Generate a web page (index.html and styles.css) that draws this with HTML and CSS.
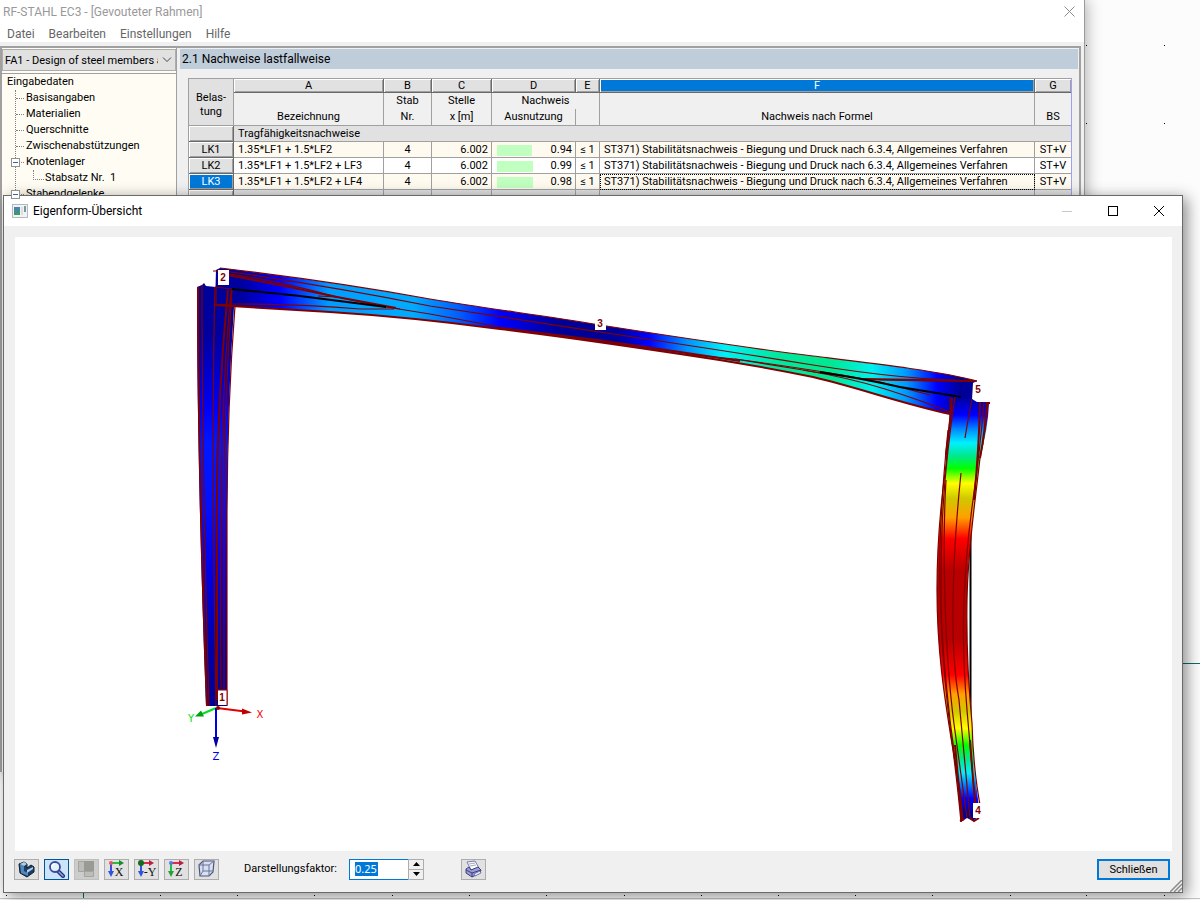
FILE: index.html
```html
<!DOCTYPE html>
<html lang="de">
<head>
<meta charset="utf-8">
<title>RF-STAHL EC3 - [Gevouteter Rahmen]</title>
<link rel="stylesheet" href="styles.css">
</head>
<body>
<main class="desktop">
  <svg class="grid" aria-hidden="true">
    <g class="grid-dots">
      <path d="M1086 45.5h1M1164 45.5h1M1086 123.500h1M1164 123.500h1"/>
      <path d="M6 895.5h1M160 895.5h1M237 895.5h1M314 895.5h1M392 895.5h1M469 895.5h1M546 895.5h1M624 895.5h1M701 895.5h1M778 895.5h1M855 895.5h1M932 895.5h1M1010 895.5h1M1086 895.5h1M1164 895.5h1"/>
    </g>
    <path d="M1180 663.5H1200M83.5 890V898" stroke="#0b6b6b"/>
    <path d="M0 898.5H1200" stroke="#c4c4c4"/>
  </svg>

  <section class="app" aria-label="RF-STAHL EC3">
    <header class="app-title">
      <span>RF-STAHL EC3 - [Gevouteter Rahmen]</span>
      <button class="app-close" aria-label="Fenster schließen"><svg width="11" height="11" viewBox="0 0 11 11"><path d="M.5.5l10 10M10.5.5l-10 10" stroke="#8c8c8c" fill="none"/></svg></button>
    </header>
    <nav class="menu">
      <button>Datei</button><button>Bearbeiten</button><button>Einstellungen</button><button>Hilfe</button>
    </nav>
    <div class="app-body">
      <aside class="side">
        <div class="case">
          <select aria-label="Bemessungsfall"><option>FA1 - Design of steel members according to Eurocode 3</option></select>
          <svg class="chevron" width="10" height="6" viewBox="0 0 10 6"><path d="M1 .5l4 4 4-4" fill="none" stroke="#444"/></svg>
        </div>
        <div class="tree">
          <div class="root">Eingabedaten</div>
          <ul>
            <li>Basisangaben</li>
            <li>Materialien</li>
            <li>Querschnitte</li>
            <li>Zwischenabstützungen</li>
            <li class="open"><button class="toggle" aria-label="Knotenlager zuklappen"></button>Knotenlager
              <ul class="sub"><li>Stabsatz Nr.&nbsp; 1</li></ul>
            </li>
            <li class="open"><button class="toggle" aria-label="Stabendgelenke zuklappen"></button>Stabendgelenke</li>
          </ul>
        </div>
      </aside>
      <section class="content">
        <h1>2.1 Nachweise lastfallweise</h1>
        <div class="sheet">
          <table>
            <colgroup><col class="c-head"><col class="c-a"><col class="c-b"><col class="c-c"><col class="c-d"><col class="c-e"><col><col class="c-g"></colgroup>
            <thead>
              <tr class="letters"><th rowspan="3" class="corner">Belas-<br>tung</th><th>A</th><th>B</th><th>C</th><th>D</th><th>E</th><th class="active">F</th><th class="last">G</th></tr>
              <tr class="names"><th rowspan="2">Bezeichnung</th><th rowspan="2">Stab<br>Nr.</th><th rowspan="2">Stelle<br>x [m]</th><th colspan="2" class="group">Nachweis</th><th rowspan="2">Nachweis nach Formel</th><th rowspan="2" class="last">BS</th></tr>
              <tr class="names"><th>Ausnutzung</th><th></th></tr>
            </thead>
            <tbody>
              <tr class="section"><th></th><td colspan="7" class="last">Tragfähigkeitsnachweise</td></tr>
              <tr class="odd"><th>LK1</th><td>1.35*LF1 + 1.5*LF2</td><td class="mid">4</td><td class="num">6.002</td><td class="num"><span class="bar" style="width:35px"></span>0.94</td><td class="mid">≤ 1</td><td>ST371) Stabilitätsnachweis - Biegung und Druck nach 6.3.4, Allgemeines Verfahren</td><td class="mid last">ST+V</td></tr>
              <tr><th>LK2</th><td>1.35*LF1 + 1.5*LF2 + LF3</td><td class="mid">4</td><td class="num">6.002</td><td class="num"><span class="bar" style="width:36px"></span>0.99</td><td class="mid">≤ 1</td><td>ST371) Stabilitätsnachweis - Biegung und Druck nach 6.3.4, Allgemeines Verfahren</td><td class="mid last">ST+V</td></tr>
              <tr class="odd"><th class="active">LK3</th><td>1.35*LF1 + 1.5*LF2 + LF4</td><td class="mid">4</td><td class="num">6.002</td><td class="num"><span class="bar" style="width:36px"></span>0.98</td><td class="mid">≤ 1</td><td class="focus">ST371) Stabilitätsnachweis - Biegung und Druck nach 6.3.4, Allgemeines Verfahren</td><td class="mid last">ST+V</td></tr>
              <tr class="blank"><th></th><td></td><td></td><td></td><td></td><td></td><td></td><td class="last"></td></tr>
            </tbody>
          </table>
        </div>
      </section>
    </div>
  </section>

  <section class="dialog" role="dialog" aria-labelledby="dlg-title">
    <header class="dlg-bar">
      <svg width="16" height="14" viewBox="0 0 16 14"><defs><linearGradient id="ico" x1="0" y1="0" x2="0" y2="1"><stop offset="0" stop-color="#4b7fc0"/><stop offset="1" stop-color="#3f9a62"/></linearGradient></defs><rect x=".5" y=".5" width="15" height="13" fill="#f2f2f2" stroke="#b5b9bd"/><rect x="2" y="3" width="6" height="8" fill="url(#ico)"/><rect x="9" y="3" width="2" height="8" fill="#dcdfe2"/><rect x="12" y="2" width="2" height="6" fill="#6f9aa0"/></svg>
      <h2 id="dlg-title">Eigenform-Übersicht</h2>
      <div class="win-buttons">
        <button disabled aria-label="Minimieren"><svg width="12" height="12" viewBox="0 0 12 12"><path d="M1 6.500h10" stroke="#c8c8c8"/></svg></button>
        <button aria-label="Maximieren"><svg width="12" height="12" viewBox="0 0 12 12"><rect x="1.500" y="1.500" width="9" height="9" fill="none" stroke="#000"/></svg></button>
        <button aria-label="Schließen"><svg width="12" height="12" viewBox="0 0 12 12"><path d="M1 1l10 10M11 1L1 11" stroke="#000" fill="none"/></svg></button>
      </div>
    </header>

    <div class="view">
      <svg viewBox="15 237 1157 614" preserveAspectRatio="xMidYMid meet" role="img" aria-label="Eigenform des Rahmens">
        <defs>
          <linearGradient id="g-left" gradientUnits="userSpaceOnUse" x1="0" y1="285" x2="0" y2="706">
            <stop offset="0" stop-color="#009"/><stop offset=".12" stop-color="#0000a0"/><stop offset=".29" stop-color="#0000f4"/><stop offset=".38" stop-color="#0018ff"/><stop offset=".52" stop-color="#0010ff"/><stop offset=".68" stop-color="#0000e8"/><stop offset=".86" stop-color="#0000a8"/><stop offset="1" stop-color="#009"/>
          </linearGradient>
          <linearGradient id="g-beam" gradientUnits="userSpaceOnUse" x1="215" y1="300" x2="975" y2="300">
            <stop offset="0" stop-color="#009"/><stop offset=".035" stop-color="#0000a0"/><stop offset=".085" stop-color="#00f"/><stop offset=".15" stop-color="#009cff"/><stop offset=".26" stop-color="#00acff"/><stop offset=".32" stop-color="#0060ff"/><stop offset=".375" stop-color="#00f"/><stop offset=".45" stop-color="#009"/><stop offset=".53" stop-color="#009"/><stop offset=".57" stop-color="#00f"/><stop offset=".62" stop-color="#0090ff"/><stop offset=".67" stop-color="#00f0f8"/><stop offset=".74" stop-color="#00e8a0"/><stop offset=".81" stop-color="#00e890"/><stop offset=".865" stop-color="#00f0f0"/><stop offset=".91" stop-color="#0098ff"/><stop offset=".95" stop-color="#00f"/><stop offset=".98" stop-color="#009"/><stop offset="1" stop-color="#009"/>
          </linearGradient>
          <linearGradient id="g-right" gradientUnits="userSpaceOnUse" x1="0" y1="396" x2="0" y2="822">
            <stop offset="0" stop-color="#009"/><stop offset=".045" stop-color="#00f"/><stop offset=".08" stop-color="#0090ff"/><stop offset=".11" stop-color="#00f0ff"/><stop offset=".14" stop-color="#00e890"/><stop offset=".17" stop-color="#0f0"/><stop offset=".205" stop-color="#ff0"/><stop offset=".24" stop-color="#d0c800"/><stop offset=".285" stop-color="#ffa000"/><stop offset=".335" stop-color="#f00"/><stop offset=".41" stop-color="#b80000"/><stop offset=".57" stop-color="#b80000"/><stop offset=".655" stop-color="#f00"/><stop offset=".7" stop-color="#ffa000"/><stop offset=".74" stop-color="#d0c800"/><stop offset=".78" stop-color="#ff0"/><stop offset=".82" stop-color="#0f0"/><stop offset=".85" stop-color="#00e880"/><stop offset=".885" stop-color="#00f0ff"/><stop offset=".92" stop-color="#0060ff"/><stop offset=".945" stop-color="#00f"/><stop offset=".98" stop-color="#009"/><stop offset="1" stop-color="#009"/>
          </linearGradient>
        </defs>

        <!-- left column -->
        <path fill="url(#g-left)" d="M197 287L202 285 204 283 206 286 216 287 236 289 234 307Q227 410 227 520V706L206 706Q197 470 197 287Z"/>
        <!-- beam -->
        <path fill="url(#g-beam)" d="M216 270L220 268Q330 281 430 299C490 309 540 315 600 325Q740 347 813 356C870 363 940 371 977 381L973 383 972 400 950 414C900 403 860 388 813 377Q750 364 680 354C620 345 560 336 500 329Q410 317 330 312L215 305Z"/>
        <g class="edge">
          <path d="M220 268Q330 281 430 299C490 309 540 315 600 325Q740 347 813 356C870 363 940 371 977 381"/>
          <path d="M217 270Q330 286 430 306C500 317 550 324 600 332Q720 350 813 365T977 381"/>
          <path d="M222 273Q270 279 337 297L380 306 430 314 500 327"/>
          <path d="M318 296L337 297 400 309" />
          <path d="M232 304Q300 304 360 309L394 309"/>
          <path d="M215 287L232 289M215 305L232 304M213 271h6"/>
          <path d="M680 354L735 359 803 370Q845 377 867 379T973 381"/>
          <path d="M735 359Q830 372 880 382L930 395"/>
          <path d="M803 370Q850 378 885 389T950 412"/>
        </g>
        <g class="edge thick">
          <path d="M214 305L330 312Q410 317 500 329C560 336 620 345 680 354Q750 364 813 377C860 388 900 403 950 414L961 416"/>
          <path d="M228 275Q280 285 337 297L396 308"/>
          <path d="M500 328Q590 338 680 352L740 361"/>
          <path d="M865 379L974 381"/>
        </g>
        <path class="axis" d="M232 289L300 296 386 307M820 372Q865 379 900 387L961 397"/>
        <g class="edge">
          <path d="M202 285Q202 470 209 706M215 287Q211 430 216 706M231 290C220 410 220 520 221 690M232 290Q223 430 224 520V704"/>
          <path d="M216 287V304M235 306Q227 410 227 520V706"/>
        </g>
        <g class="edge thick">
          <path d="M198 287Q198 470 207 706"/>
          <path d="M228 290Q215 420 217 560V700"/>
        </g>

        <!-- right column -->
        <path class="axis" d="M970.500 530V730"/>
        <path fill="url(#g-right)" d="M950 397L972 399 977 402 989 402Q988 430 980 458C975 505 968 545 967 600Q966 660 972 723C973 760 976 785 980 815L973 821 967 818 961 822Q958 790 953 750C944 695 937 650 937 590Q937 530 946 465L950 417Z"/>
        <g class="edge">
          <path d="M950 397V417L946 465Q937 530 937 590C937 650 944 695 953 750Q958 790 961 822"/>
          <path d="M955 397Q944 470 942 530T942 640Q948 730 960 790L963 820"/>
          <path d="M948 430Q938 530 940 590T950 720L961 805"/>
          <path d="M946 480Q943 530 945 600T954 724L967 818"/>
          <path d="M972 399L968 420 965 438M961 473Q954 540 953 600T959 700L970 818"/>
          <path d="M988 402Q986 430 980 458C975 505 968 545 967 600Q966 660 972 723C973 760 976 785 981 810"/>
          <path d="M984 402Q980 450 973 500T964 600 967 710L976 814"/>
        </g>
        <g class="edge thick">
          <path d="M952 398Q950 425 946 455"/>
          <path d="M980 402Q979 450 974 500M987 403Q985 432 980 458"/>
          <path d="M955 745L962 821M970 740Q973 780 976 812M986 403h4M960 821l4-2M970 818l4 3 5-3"/>
        </g>

        <!-- coordinate cross -->
        <g fill="none" stroke-width="2">
          <path d="M217 708L245 711.500" stroke="#e00000"/><path d="M216 708L202 714" stroke="#00e020"/><path d="M216 708V739" stroke="#0000e8"/>
        </g>
        <path d="M252 712.500l-10 2-0-6z" fill="#c00000"/>
        <path d="M195 716.500l6-6 3 6z" fill="#00a010"/>
        <path d="M216 748l-3-11h6z" fill="#0000a0"/>
        <circle cx="218" cy="708" r="2" fill="#900000"/>
        <g class="axis-label">
          <text x="260" y="718" fill="#f00000">X</text><text x="191" y="722" fill="#00e000">Y</text><text x="216" y="760" fill="#0000e0">Z</text>
        </g>

        <!-- node numbers -->
        <g fill="#fff"><rect x="218" y="270" width="11" height="15"/><rect x="595" y="317" width="11" height="13"/><rect x="973" y="383" width="12" height="16"/><rect x="973" y="803" width="9" height="15"/><rect x="218" y="690" width="9" height="15"/></g>
        <path d="M218 690H227V705" fill="none" stroke="#a00000"/>
        <g class="node-label">
          <text x="223" y="281">2</text><text x="600" y="327">3</text><text x="978" y="393">5</text><text x="978" y="814">4</text><text x="222" y="701">1</text>
        </g>
      </svg>
    </div>

    <footer class="tools">
      <div class="tool-row">
        <button class="tool" aria-label="Rendering"><svg viewBox="0 0 20 18"><path d="M2 4l5-2 3 2v4l4-3 3 2v5l-7 5-7-4z" fill="#1f3d63" stroke="#101c2c"/><path d="M3 4l4 2v5l4 2v3l-7-3z" fill="#4f86bd"/><path d="M3 4l4-2 3 2-3 2zM10 10l6-3v2l-6 4z" fill="#a8d0f0"/></svg></button>
        <button class="tool on" aria-label="Zoom" aria-pressed="true"><svg viewBox="0 0 20 18"><path d="M11 11l5 5" stroke="#26347e" stroke-width="4" stroke-linecap="round"/><path d="M12 12l4 4" stroke="#8fa2dc" stroke-width="1.500" stroke-linecap="round"/><circle cx="8" cy="7" r="5" fill="#e4f1fc" stroke="#3a4a9c" stroke-width="1.800"/><path d="M5 7q0-3 3-3" fill="none" stroke="#fff" stroke-width="1.500"/></svg></button>
        <button class="tool off" disabled aria-label="Ansichten"><svg viewBox="0 0 20 18"><path d="M1.500 1.500h7v10h-7zM7.500 11.500h9v5h-9z" fill="#bcbcb8" stroke="#a4a4a0"/><path d="M7 1h10v10H7z" fill="#9a9a94"/></svg></button>
        <button class="tool" aria-label="Ansicht in X"><svg viewBox="0 0 20 18"><path d="M4 3h9" stroke="#25bd3c" stroke-width="2"/><path d="M12 0l5 3-5 3z" fill="#128f2c"/><path d="M4 3v9" stroke="#3052df" stroke-width="2"/><path d="M1 11h6l-3 6z" fill="#3052df"/><circle cx="4" cy="3" r="2" fill="#f05060"/><text x="12" y="16">X</text></svg></button>
        <button class="tool" aria-label="Ansicht in -Y"><svg viewBox="0 0 20 18"><path d="M4 3h9" stroke="#dc2946" stroke-width="2"/><path d="M12 0l5 3-5 3z" fill="#b8203c"/><path d="M4 3v9" stroke="#3052df" stroke-width="2"/><path d="M1 11h6l-3 6z" fill="#3052df"/><circle cx="4" cy="3" r="3" fill="#116b20"/><text x="13" y="16">-Y</text></svg></button>
        <button class="tool" aria-label="Ansicht in Z"><svg viewBox="0 0 20 18"><path d="M4 3h9" stroke="#dc2946" stroke-width="2"/><path d="M12 0l5 3-5 3z" fill="#b8203c"/><path d="M4 3v9" stroke="#25bd3c" stroke-width="2"/><path d="M1 11h6l-3 6z" fill="#25a03c"/><circle cx="4" cy="3" r="2" fill="#5078f0"/><text x="12" y="16">Z</text></svg></button>
        <button class="tool" aria-label="Isometrie"><svg viewBox="0 0 20 18"><path d="M2 5l4-4h11l-1 11-4 4H3z" fill="#d7dff0" stroke="#4b577c" stroke-width="1.200"/><path d="M2 5h10v11M12 5l5-4M6 1v10l-3 5M6 11h10" fill="none" stroke="#697598"/></svg></button>
      </div>
      <label for="factor">Darstellungsfaktor:</label>
      <div class="spin">
        <div class="spin-box"><input id="factor" type="text" inputmode="decimal" value="0.25"></div>
        <div class="spin-btns">
          <button aria-label="Erhöhen"><svg width="7" height="4" viewBox="0 0 7 4"><path d="M0 4l3.500-4L7 4z"/></svg></button>
          <button aria-label="Verringern"><svg width="7" height="4" viewBox="0 0 7 4"><path d="M0 0l3.500 4L7 0z"/></svg></button>
        </div>
      </div>
      <button class="tool" aria-label="Drucken"><svg viewBox="0 0 20 18"><path d="M3 2l8-1 4 7-8 2z" fill="#fff" stroke="#777ba0"/><path d="M5 4l6-1M6 6l6-1" stroke="#a4a8c0"/><path d="M2 9l3-2 2 3 7-3 3 3-1 3-8 4-6-4z" fill="#9a9cd8" stroke="#3d3f78"/><path d="M2 10l6 3v4M8 13l9-3" fill="none" stroke="#3d3f78"/><path d="M10 14l6-3 1 2-6 3z" fill="#eceeff" stroke="#55589a" stroke-width=".7"/></svg></button>
      <button class="close">Schließen</button>
    </footer>
    <svg class="grip" width="12" height="12" viewBox="0 0 12 12" aria-hidden="true"><path d="M0 12L12 0M4 12l8-8M8 12l4-4" stroke="#8a8a8a" stroke-width="1.500"/></svg>
  </section>
</main>
</body>
</html>
```
FILE: styles.css
```css
* { box-sizing: border-box; }
body { margin: 0; font-family: Roboto, "Liberation Sans", sans-serif; font-size: 11px; color: #000; }
button { border: 0; padding: 0; background: none; font: inherit; color: inherit; }
svg { display: block; }

.desktop { position: relative; height: 100vh; min-height: 600px; overflow: hidden; background: #fcfcfc; }
.grid { position: absolute; inset: 0; width: 100%; height: 100%; }
.grid-dots { stroke: #000; }

/* application window */
.app { position: absolute; inset: 0 115px 128px 0; display: flex; flex-direction: column; background: #f0f0f0; border-right: 1px solid #9a9a9a; box-shadow: 2px 0 14px rgba(0, 0, 0, .3); }
.app-title { display: flex; justify-content: space-between; align-items: center; height: 23px; padding: 0 9px 0 3px; background: #fff; color: #999; font-size: 12px; }
.menu { display: flex; gap: 14px; height: 19px; padding: 0 7px; background: #fff; color: #666; font-size: 12px; line-height: 23px; }
.app-body { flex: 1; display: flex; margin-top: 4px; margin-right: 3px; border: 2px solid #a0a0a0; border-bottom: 0; min-height: 0; }
.side { width: 175px; display: flex; flex-direction: column; border-right: 1px solid #a0a0a0; background: #fffdf3; }
.case { display: flex; align-items: center; height: 22px; margin-top: 1px; border: 1px solid #adadad; background: #e1e1e1; padding: 0 3px 0 2px; }
.case select { flex: 1; min-width: 0; appearance: none; border: 0; padding: 0; background: none; overflow: hidden; color: #000; font: 11px Roboto, sans-serif; }
.chevron { flex: none; margin-left: 4px; }
.tree { flex: 1; margin-top: 2px; border-top: 1px solid #a0a0a0; line-height: 16px; }
.root { padding-left: 5px; }
.tree ul { list-style: none; margin: 0 0 0 13px; padding: 0; border-left: 1px dotted #808080; }
.tree li { position: relative; padding-left: 10px; }
.tree li::before { content: ""; position: absolute; left: 0; top: 8px; width: 8px; border-top: 1px dotted #808080; }
.tree .sub { margin-left: 7px; border-left: 0; }
.tree .sub li { padding-left: 12px; }
.tree .sub li::before { top: 0; height: 9px; border: 1px dotted #808080; border-width: 0 0 1px 1px; width: 10px; }
.toggle { position: absolute; left: -5px; top: 4px; z-index: 1; width: 9px; height: 9px; border: 1px solid #919191; background: linear-gradient(#3f5fb0, #3f5fb0) center / 5px 1px no-repeat #fff; }

.content { flex: 1; min-width: 0; display: flex; flex-direction: column; padding: 1px 1px 0 3px; }
h1 { margin: 0; padding: 0 2px; height: 20px; background: #bfccda; font-size: 12px; font-weight: 400; line-height: 20px; }
.sheet { flex: 1; margin: 9px 6px 0 8px; border-top: 1px solid #a0a0a0; border-left: 1px solid #a0a0a0; border-right: 1px solid #a0a0f0; }
table { width: 100%; table-layout: fixed; border-collapse: separate; border-spacing: 0; line-height: 14px; }
.c-head { width: 45px; } .c-a { width: 150px; } .c-b { width: 48px; } .c-c { width: 60px; } .c-d { width: 84px; } .c-e { width: 24px; } .c-g { width: 36px; }
th, td { height: 16px; padding: 0 4px; border: solid #a0a0a0; border-width: 0 1px 1px 0; font-weight: 400; white-space: nowrap; overflow: hidden; text-align: left; }
th { padding: 0; text-align: center; }
th.last, td.last { border-right: 0; }
.letters th { height: 14px; line-height: 12px; background: #e1e1e1; border-color: #696969; box-shadow: inset 1px 1px #fff, inset -1px -1px #a0a0a0; }
.letters .corner { border-color: #a0a0a0; box-shadow: none; line-height: 14px; padding-top: 6px; }
.names th { background: #f0f0f0; vertical-align: bottom; line-height: 16px; }
.names .group { border-bottom: 0; }
tbody th { background: #e1e1e1; border-color: #696969; box-shadow: inset 1px 1px #fff, inset -1px -1px #a0a0a0; }
.section td { background: #e1e1e1; }
tbody td { background: #fff; }
.odd td { background: #fffaf0; }
th.active, .letters th.active { background: #0078d7; color: #fff; }
.mid { text-align: center; padding: 0; }
.num { text-align: right; padding: 0 3px; }
.bar { float: left; height: 11px; margin: 2px 0 0 2px; background: #c0ffc0; }
.blank td { background: #dfe1e3; }
td.focus { outline: 1px dotted #000; outline-offset: -1px; }

/* mode shape dialog */
.dialog { position: absolute; inset: 195px 17px 7px 3px; display: flex; flex-direction: column; background: #f0f0f0; border: 1px solid #6a6a6a; box-shadow: 4px 3px 14px rgba(0, 0, 0, .45); }
.dlg-bar { display: flex; align-items: center; gap: 5px; height: 30px; padding: 0 0 1px 8px; background: #fff; }
h2 { margin: 0; font-size: 12px; font-weight: 400; }
.win-buttons { display: flex; height: 100%; margin-left: auto; }
.win-buttons button { display: flex; align-items: center; justify-content: center; width: 46px; }
.view { flex: 1; min-height: 0; margin: 11px 10px 0 11px; background: #fff; }
.view svg { width: 100%; height: 100%; }
.edge { fill: none; stroke: #800000; stroke-width: 1.200; }
.thick { stroke-width: 2; }
.axis { fill: none; stroke: #000; stroke-width: 2; }
.axis-label { font: 10px "DejaVu Sans", sans-serif; text-anchor: middle; }
.node-label { font: bold 10px "Liberation Sans", sans-serif; text-anchor: middle; fill: #800000; }

.tools { display: flex; align-items: center; height: 41px; padding: 0 12px 5px 10px; }
.tool-row { display: flex; gap: 5px; }
.tool { display: flex; align-items: center; justify-content: center; width: 25px; height: 21px; border: 1px solid #adadad; background: #e1e1e1; }
.tool svg { width: 20px; height: 18px; fill: none; }
.tool text { font: 12px "Liberation Serif", serif; text-anchor: middle; fill: #111; }
.tool.on { border-color: #005499; background: #cce4f7; }
.tool.off { background: #ccc; border-color: #bfbfbf; }
.tools label { margin-left: 25px; width: 105px; padding-bottom: 2px; }
.spin { display: flex; height: 21px; margin-right: 37px; }
.spin-box { width: 59px; padding: 2px 5px; border: 1px solid #0078d7; border-right: 0; background: #fff; }
.spin-box input { width: 23px; height: 14px; border: 0; padding: 0; background: #0078d7; color: #fff; font: 11px "Noto Sans", sans-serif; }
.spin-btns { display: flex; flex-direction: column; width: 16px; border: 1px solid #adadad; background: #f0f0f0; }
.spin-btns button { flex: 1; display: flex; align-items: center; justify-content: center; }
.spin-btns button + button { border-top: 1px solid #adadad; }
.close { margin-left: auto; width: 73px; height: 21px; border: 2px solid #0078d7; background: #e1e1e1; }
.grip { position: absolute; right: 0; bottom: 0; }
```
